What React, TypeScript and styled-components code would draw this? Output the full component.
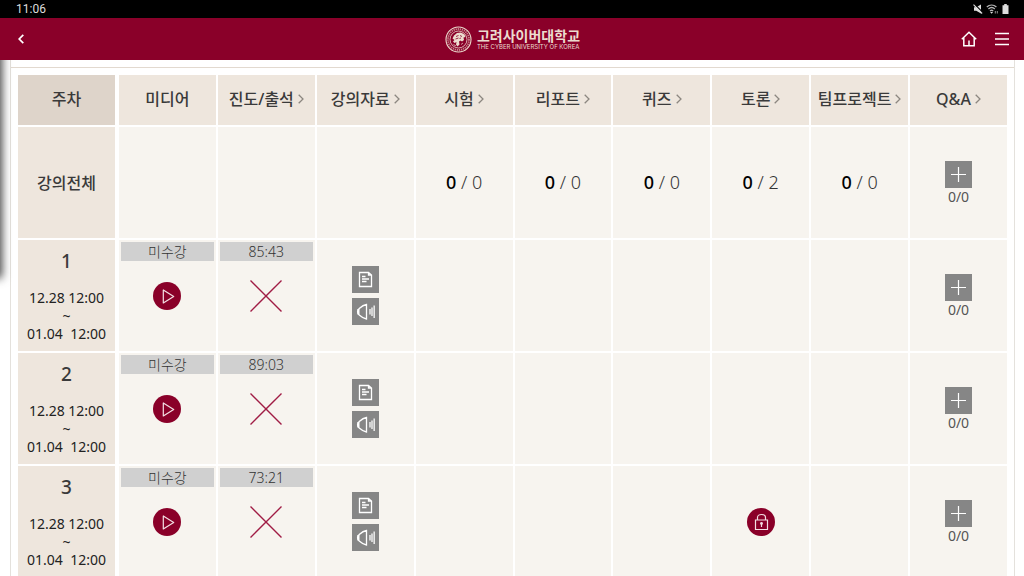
import React from "react";
import styled, { createGlobalStyle } from "styled-components";

const GlobalStyle = createGlobalStyle`
  *, *::before, *::after { box-sizing: border-box; }
  body {
    margin: 0;
    background: #fff;
    color: #3a3a3a;
    font-family: "Noto Sans", "Noto Sans CJK KR", sans-serif;
  }
  button { margin: 0; padding: 0; border: 0; background: none; font: inherit; color: inherit; cursor: pointer; }
  a { color: inherit; text-decoration: none; }
`;

const Screen = styled.div`
  display: flex;
  flex-direction: column;
  height: 100vh;
  overflow: hidden;
`;

const StatusBar = styled.div`
  flex: none;
  display: flex;
  align-items: center;
  justify-content: space-between;
  height: 18px;
  padding: 0 15px 0 16px;
  background: #000;
  color: #ddd;
  font: 12px/18px Roboto, sans-serif;
`;

const StatusIcons = styled.div`
  display: flex;
  align-items: center;
  gap: 3px;
`;

const AppBar = styled.header`
  flex: none;
  display: grid;
  grid-template-columns: 1fr auto 1fr;
  align-items: center;
  height: 42px;
  padding: 0 15px 0 16px;
  background: #8a0029;
  color: #fff;
`;

const BarActions = styled.div<{ $end?: boolean }>`
  display: flex;
  justify-content: ${(p) => (p.$end ? "flex-end" : "flex-start")};
  gap: 18px;
`;

const IconButton = styled.button`
  display: flex;
`;

const Brand = styled.a`
  display: flex;
  align-items: center;
  gap: 5px;
  color: #ecdccf;
`;

const BrandText = styled.span`
  display: flex;
  flex-direction: column;
`;

const BrandName = styled.span`
  font: 700 14px/16px "Noto Sans CJK KR", sans-serif;
`;

const BrandSub = styled.span`
  font: 6px/8px Inter, sans-serif;
  white-space: nowrap;
`;

const Content = styled.main`
  position: relative;
  flex: 1;
  min-height: 0;
  padding: 0 9px 0 10px;
  overflow: hidden;
`;

const EdgeShadow = styled.div`
  position: absolute;
  left: -10px;
  top: -20px;
  width: 10px;
  height: 236px;
  box-shadow: 0 0 10px 2px rgba(0, 0, 0, 0.75);
`;

const Panel = styled.section`
  min-height: 100%;
  border: solid #e4e1dc;
  border-width: 0 1px;
`;

const Divider = styled.div`
  height: 8px;
  border-bottom: 1px solid #e2d9cf;
`;

const Schedule = styled.table`
  width: calc(100% - 10px);
  margin: 5px 5px 0;
  table-layout: fixed;
  border-collapse: separate;
  border-spacing: 2px;
`;

const HeadCell = styled.th<{ $first?: boolean }>`
  width: ${(p) => (p.$first ? "99px" : "auto")};
  height: 50px;
  padding: 0 0 2px;
  border-right: ${(p) => (p.$first ? "2px solid #fff" : "0")};
  background: ${(p) => (p.$first ? "#ded4ca" : "#eee6dd")};
  font-size: 16px;
  font-weight: 500;
  line-height: 24px;
  white-space: nowrap;
`;

const HeadLink = styled.a`
  display: inline-flex;
  align-items: center;
  gap: 4px;
`;

const WeekCell = styled.th`
  height: 111px;
  padding: 0 0 2px;
  border-right: 2px solid #fff;
  background: #eee6dd;
  font-size: 16px;
  font-weight: 500;
  text-align: center;
`;

const WeekNumber = styled.div`
  font-size: 19px;
  line-height: 24px;
  padding: 2px 0 16px;
`;

const Period = styled.div`
  font-size: 14px;
  font-weight: 400;
  line-height: 18px;
  color: #222;
  white-space: pre;
`;

const Cell = styled.td`
  height: 111px;
  padding: 2px;
  background: #f7f4ef;
  text-align: center;
  vertical-align: middle;
`;

const Tracked = styled.div`
  display: flex;
  flex-direction: column;
  height: 107px;
`;

const Tag = styled.div`
  height: 19px;
  background: #d0d0d0;
  color: #333;
  font-size: 14px;
  font-weight: 300;
  line-height: 19px;
`;

const TrackedBody = styled.div`
  flex: 1;
  display: flex;
  align-items: center;
  justify-content: center;
  padding-bottom: 19px;
`;

const Stack = styled.div`
  display: flex;
  flex-direction: column;
  align-items: center;
  gap: 5px;
`;

const SquareButton = styled.button`
  display: flex;
  width: 27px;
  height: 27px;
  background: #868686;
`;

const RoundButton = styled.button`
  display: inline-flex;
  width: 28px;
  height: 28px;
  border-radius: 50%;
  background: #8a0029;
  vertical-align: middle;
`;

const Questions = styled.div`
  display: flex;
  flex-direction: column;
  align-items: center;
  color: #555;
  font-size: 14px;
  line-height: 17px;
`;

const Score = styled.div`
  padding-bottom: 2px;
  color: #333;
  font-size: 18px;
  font-weight: 300;
  line-height: 24px;
  b { color: #000; font-weight: 500; }
`;

const Chevron = () => (
  <svg width="6" height="10" viewBox="0 0 6 10" fill="none" stroke="#8c8780" strokeWidth="1.3" aria-hidden="true">
    <path d="M.7.7 5 5 .7 9.3" />
  </svg>
);

const PlusIcon = () => (
  <svg width="27" height="27" viewBox="0 0 27 27" fill="none" stroke="#fff" strokeWidth="1.2" aria-hidden="true">
    <path d="M6 13.5h15M13.5 6v15" />
  </svg>
);

const DocumentIcon = () => (
  <svg width="27" height="27" viewBox="0 0 27 27" fill="none" stroke="#fff" strokeWidth="1.3" aria-hidden="true">
    <path d="M7.5 6.5h9l3 2.5v11.5h-12zM16.5 6.5V9h3M10 10.5h3.500M10 13h7M10 15.500h4.500" />
  </svg>
);

const SpeakerIcon = () => (
  <svg width="27" height="27" viewBox="0 0 27 27" fill="none" stroke="#fff" strokeWidth="1.3" aria-hidden="true">
    <path d="M14.5 6.5V21C11.5 20.5 9 18.600 7.200 17 5 15.500 5 12 7.200 10.500 9 8.900 11.500 7 14.500 6.500z" />
    <path d="M6.500 11v5.500" strokeWidth="2" />
    <path d="M18 11v5.500M20 9.500v8.500M22.200 7.500v12.500" strokeWidth="1.600" opacity=".8" />
  </svg>
);

const PlayIcon = () => (
  <svg width="28" height="28" viewBox="0 0 28 28" fill="none" stroke="#f3dfe4" strokeWidth="1.2" strokeLinejoin="round" aria-hidden="true">
    <path d="M10.3 8v13l10.4-6.5z" />
  </svg>
);

const LockIcon = () => (
  <svg width="28" height="28" viewBox="0 0 28 28" fill="none" stroke="#f3dfe4" strokeWidth="1.2" aria-hidden="true">
    <path d="M8.5 12h12v9.500h-12zM10.500 12V9.500c0-4 8-4 8 0V12" />
    <circle cx="14.5" cy="15.5" r="1.4" fill="#f3dfe4" stroke="none" />
    <path d="M14.5 15.500v3.500" />
  </svg>
);

const CrossMark = () => (
  <svg width="32" height="32" viewBox="0 0 32 32" stroke="#a01c45" strokeWidth="1.4" role="img" aria-label="결석">
    <path d="M.5.5l31 31M31.500.5l-31 31" />
  </svg>
);

const Emblem = () => (
  <svg width="27" height="27" viewBox="0 0 27 27" fill="none" stroke="#ecdccf" aria-hidden="true">
    <circle cx="13.5" cy="13.5" r="12.5" strokeWidth="1.1" />
    <circle cx="13.5" cy="13.5" r="10.5" strokeWidth="1.8" strokeDasharray="1.3 .8" opacity=".6" />
    <circle cx="13.5" cy="13.5" r="8.5" strokeWidth=".8" />
    <path d="M7.500 12.500 9 9.500l3-2.500 4-.5 3.500 2 1 2.500-2 .5.500 2.500-2 1.500-1.500-1-1.500 1 .5 3-2 2-1.500-2 .5-2.500-2 1-1.500-1.500 1.500-1.500z" fill="#ecdccf" stroke="none" />
    <path d="M11 10.500l2.500-1M10.500 13l3-1M15 9.500l2 1M14.500 12.500l1.500-.5" stroke="#8a0029" strokeWidth=".8" />
    <path d="M8.500 18.500l2.500 1.500M16 18.500l2-1.500" strokeWidth=".9" opacity=".8" />
  </svg>
);

const MuteIcon = () => (
  <svg width="10" height="10" viewBox="0 0 10 10" aria-hidden="true">
    <path d="M1 3.3h2.200L8 .5v9L3.200 6.700H1z" fill="#ddd" />
    <path d="M1.500.2l8.300 8.300" stroke="#000" strokeWidth="1.2" />
    <path d="M.5.7l8.600 8.800" stroke="#ddd" strokeWidth="1.1" />
  </svg>
);

const WifiIcon = () => (
  <svg width="13" height="10" viewBox="0 0 13 10" fill="none" stroke="#b5b5b5" strokeWidth="1.3" aria-hidden="true">
    <path d="M.8 3C3.600.4 7.600.4 10.400 3M2.400 5c2-1.800 4.600-1.800 6.400 0M4 7c1-.9 2.200-.9 3.200 0" />
    <path d="M5.600 9.800 4.100 7.900h3z" fill="#ddd" stroke="none" />
    <path d="M9.300 7v2.500M11.300 7v2.500" strokeWidth=".8" />
  </svg>
);

const BatteryIcon = () => (
  <svg width="7" height="10" viewBox="0 0 7 10" fill="#ddd" aria-hidden="true">
    <path d="M2.200 0h2.600v1.200H6.500V10h-6V1.200h1.700z" />
  </svg>
);

const BackIcon = () => (
  <svg width="10" height="12" viewBox="0 0 10 12" fill="none" stroke="#fff" strokeWidth="1.7" aria-hidden="true">
    <path d="M7.300 1.800 3.200 6l4.100 4.200" />
  </svg>
);

const HomeIcon = () => (
  <svg width="16" height="16" viewBox="0 0 16 16" fill="none" stroke="#fff" strokeWidth="1.5" aria-hidden="true">
    <path d="M.8 8.200 8 1.200l7.200 7M2.800 6.800v7.900h10.400V6.800M8 9.500v5" />
  </svg>
);

const MenuIcon = () => (
  <svg width="14" height="16" viewBox="0 0 14 16" fill="none" stroke="#fff" strokeWidth="1.6" aria-hidden="true">
    <path d="M0 2.500h14M0 8h14M0 13.500h14" />
  </svg>
);

const columns = [
  { label: "미디어", link: false },
  { label: "진도/출석", link: true },
  { label: "강의자료", link: true },
  { label: "시험", link: true },
  { label: "리포트", link: true },
  { label: "퀴즈", link: true },
  { label: "토론", link: true },
  { label: "팀프로젝트", link: true },
  { label: "Q&A", link: true },
];

const totals = [
  { name: "시험", done: 0, all: 0 },
  { name: "리포트", done: 0, all: 0 },
  { name: "퀴즈", done: 0, all: 0 },
  { name: "토론", done: 0, all: 2 },
  { name: "팀프로젝트", done: 0, all: 0 },
];

const weeks = [
  { week: 1, length: "85:43", locked: false },
  { week: 2, length: "89:03", locked: false },
  { week: 3, length: "73:21", locked: true },
];

const QuestionBox = () => (
  <Questions>
    <SquareButton aria-label="질문 추가"><PlusIcon /></SquareButton>
    <span>0/0</span>
  </Questions>
);

export default function App() {
  return (
    <Screen>
      <GlobalStyle />
      <StatusBar>
        <span>11:06</span>
        <StatusIcons><MuteIcon /><WifiIcon /><BatteryIcon /></StatusIcons>
      </StatusBar>
      <AppBar>
        <BarActions>
          <IconButton aria-label="뒤로"><BackIcon /></IconButton>
        </BarActions>
        <Brand href="#home">
          <Emblem />
          <BrandText>
            <BrandName>고려사이버대학교</BrandName>
            <BrandSub>THE CYBER UNIVERSITY OF KOREA</BrandSub>
          </BrandText>
        </Brand>
        <BarActions $end>
          <IconButton aria-label="홈"><HomeIcon /></IconButton>
          <IconButton aria-label="메뉴"><MenuIcon /></IconButton>
        </BarActions>
      </AppBar>
      <Content>
        <Panel>
          <Divider />
          <Schedule>
            <thead>
              <tr>
                <HeadCell $first scope="col">주차</HeadCell>
                {columns.map((c) => (
                  <HeadCell key={c.label} scope="col">
                    {c.link ? <HeadLink href="#list">{c.label}<Chevron /></HeadLink> : c.label}
                  </HeadCell>
                ))}
              </tr>
            </thead>
            <tbody>
              <tr>
                <WeekCell scope="row">강의전체</WeekCell>
                <Cell />
                <Cell />
                <Cell />
                {totals.map((t) => (
                  <Cell key={t.name}><Score><b>{t.done}</b> / {t.all}</Score></Cell>
                ))}
                <Cell><QuestionBox /></Cell>
              </tr>
              {weeks.map((w) => (
                <tr key={w.week}>
                  <WeekCell scope="row">
                    <WeekNumber>{w.week}</WeekNumber>
                    <Period>{"12.28 12:00\n~\n01.04  12:00"}</Period>
                  </WeekCell>
                  <Cell>
                    <Tracked>
                      <Tag>미수강</Tag>
                      <TrackedBody><RoundButton aria-label="재생"><PlayIcon /></RoundButton></TrackedBody>
                    </Tracked>
                  </Cell>
                  <Cell>
                    <Tracked>
                      <Tag>{w.length}</Tag>
                      <TrackedBody><CrossMark /></TrackedBody>
                    </Tracked>
                  </Cell>
                  <Cell>
                    <Stack>
                      <SquareButton aria-label="강의 문서"><DocumentIcon /></SquareButton>
                      <SquareButton aria-label="강의 음성"><SpeakerIcon /></SquareButton>
                    </Stack>
                  </Cell>
                  <Cell />
                  <Cell />
                  <Cell />
                  <Cell>{w.locked && <RoundButton aria-label="잠김"><LockIcon /></RoundButton>}</Cell>
                  <Cell />
                  <Cell><QuestionBox /></Cell>
                </tr>
              ))}
            </tbody>
          </Schedule>
        </Panel>
        <EdgeShadow />
      </Content>
    </Screen>
  );
}
